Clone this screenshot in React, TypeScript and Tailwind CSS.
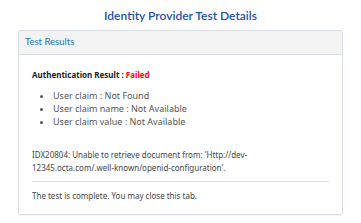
export default function App() {
  const claims = [
    'User claim : Not Found',
    'User claim name : Not Available',
    'User claim value : Not Available',
  ];

  return (
    <div className="w-[361px] h-[223px] bg-white pt-[7px] font-['Noto_Sans',sans-serif] text-[#3e3e3c]">
      <h1 className="text-center text-[12px] leading-[17px] font-['Lato',sans-serif] font-semibold text-[#1c51a8]">
        Identity Provider Test Details
      </h1>

      <div className="mx-[18px] mt-[6px] border border-[#d8dde6] rounded-[2px] shadow-[0_1px_1px_rgba(0,0,0,0.05)]">
        {/* Header */}
        <div className="h-[24px] bg-[#f3f3f3] border-b border-[#d8dde6] flex items-center px-[6px]">
          <span className="text-[9.5px] font-['Lato',sans-serif] text-[#2574c0]">Test Results</span>
        </div>

        {/* Body */}
        <div className="px-[13px] pt-[14px] pb-[12px]">
          <div className="text-[8px] leading-[12px] font-bold text-[#1a1a1a]">
            Authentication Result : <span className="text-[#ff0000]">Failed</span>
          </div>

          <ul className="mt-[8px] pl-[21px] list-disc text-[9px] leading-[13px] text-[#555]">
            {claims.map(c => (
              <li key={c}>{c}</li>
            ))}
          </ul>

          <p className="mt-[20px] text-[8px] leading-[13px] text-[#444] pr-[4px]">
            IDX20804: Unable to retrieve document from: 'Http://dev-12345.octa.com/.well-known/openid-configuration'.
          </p>

          <hr className="mt-[7px] border-[#d8dde6]" />

          <p className="mt-[7px] text-[8px] leading-[13px] text-[#444]">
            The test is complete. You may close this tab.
          </p>
        </div>
      </div>
    </div>
  );
}
